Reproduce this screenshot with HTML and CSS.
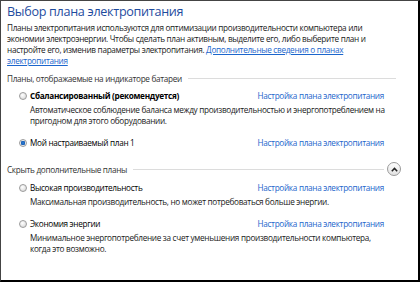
FILE: index.html
```html
<!DOCTYPE html>
<html lang="ru">
<head>
    <meta charset="UTF-8">
    <meta name="viewport" content="width=device-width, initial-scale=1.0">
    <title>Электропитание</title>
    <link rel="stylesheet" href="styles.css">
</head>
<body>
    <div class="panel">
        <h1>Выбор плана электропитания</h1>
        <p class="intro">
            Планы электропитания используются для оптимизации производительности компьютера или<br>
            экономии электроэнергии. Чтобы сделать план активным, выделите его, либо выберите план и<br>
            настройте его, изменив параметры электропитания. <a href="#">Дополнительные сведения о планах электропитания</a>
        </p>

        <div class="group-title">
            <span>Планы, отображаемые на индикаторе батареи</span>
            <div class="line"></div>
        </div>

        <div class="plan first">
            <div class="plan-head">
                <label><span class="radio"></span><b>Сбалансированный (рекомендуется)</b></label>
                <a href="#">Настройка плана электропитания</a>
            </div>
            <p class="plan-desc">Автоматическое соблюдение баланса между производительностью и энергопотреблением на пригодном для этого оборудовании.</p>
        </div>

        <div class="plan">
            <div class="plan-head">
                <label><span class="radio checked"></span>Мой настраиваемый план 1</label>
                <a href="#">Настройка плана электропитания</a>
            </div>
        </div>

        <div class="group-title extra">
            <span>Скрыть дополнительные планы</span>
            <div class="line"></div>
            <button class="toggle" title="Скрыть">
                <svg width="7" height="5" viewBox="0 0 7 5"><path d="M0.8 4.2 L3.5 1.4 L6.2 4.2" fill="none" stroke="#222" stroke-width="1.5"/></svg>
            </button>
        </div>

        <div class="plan first">
            <div class="plan-head">
                <label><span class="radio"></span>Высокая производительность</label>
                <a href="#">Настройка плана электропитания</a>
            </div>
            <p class="plan-desc">Максимальная производительность, но может потребоваться больше энергии.</p>
        </div>

        <div class="plan">
            <div class="plan-head">
                <label><span class="radio"></span>Экономия энергии</label>
                <a href="#">Настройка плана электропитания</a>
            </div>
            <p class="plan-desc">Минимальное энергопотребление за счет уменьшения производительности компьютера,<br>когда это возможно.</p>
        </div>
    </div>
</body>
</html>
```

FILE: styles.css
```css
body {
    margin: 0;
    font-family: "Open Sans", "Noto Sans", sans-serif;
    font-size: 8.2px;
    line-height: 11px;
    letter-spacing: -0.3px;
    color: #1a1a1a;
    background-color: #fff;
}
.panel {
    width: 420px;
    height: 282px;
    box-sizing: border-box;
    border-top: 1px solid #444;
    border-left: 1px solid #444;
    border-right: 2px solid #000;
    border-bottom: 2px solid #000;
    padding: 3px 22px 0 6px;
    overflow: hidden;
}
h1 {
    margin: 0;
    font-size: 12.6px;
    line-height: 16px;
    letter-spacing: -0.3px;
    font-weight: normal;
    color: #1e4b9e;
}
.intro {
    margin: 2px 0 0 0;
}
a {
    color: #1c66cc;
}
.plan a {
    text-decoration: none;
}
.group-title {
    display: flex;
    align-items: center;
    margin-top: 7px;
    color: #333;
}
.group-title .line {
    flex: 1;
    border-top: 1px solid #dcdcdc;
    margin-left: 6px;
}
.group-title.extra {
    margin-top: 14px;
    margin-right: -5px;
    height: 14px;
}
.group-title.extra .line {
    margin-right: 3px;
}
.toggle {
    width: 14px;
    height: 14px;
    padding: 0;
    border: 1px solid #9a9a9a;
    border-radius: 50%;
    background: linear-gradient(#fdfdfd, #e2e2e2);
    display: flex;
    align-items: center;
    justify-content: center;
    cursor: pointer;
}
.plan {
    padding: 0 12px 0 12px;
    margin-top: 11px;
}
.plan.first {
    margin-top: 6px;
}
.plan-head {
    display: flex;
    justify-content: space-between;
    align-items: center;
}
.plan-head label {
    display: flex;
    align-items: center;
    color: #000;
}
.radio {
    width: 8px;
    height: 8px;
    border: 1px solid #9b9b9b;
    border-radius: 50%;
    background: radial-gradient(circle at 40% 35%, #fff, #d2d2d2);
    margin-right: 3px;
    box-sizing: border-box;
}
.radio.checked {
    background: radial-gradient(circle, #2c7fd6 0, #1d5fb4 2px, #e9eef3 2.5px, #d8d8d8 100%);
}
.plan-desc {
    margin: 3px -10px 0 11px;
    color: #1a1a1a;
}
```
